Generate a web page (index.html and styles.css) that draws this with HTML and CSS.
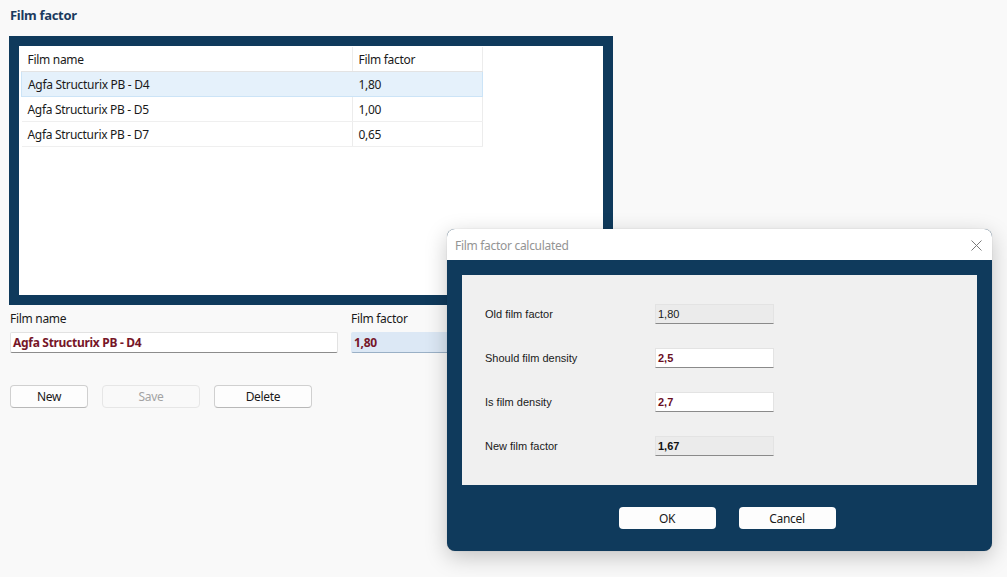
FILE: index.html
```html
<!DOCTYPE html>
<html>

<head>
  <title>Film factor</title>
  <link rel="stylesheet" href="styles.css">
</head>

<body>
  <div id="page">
    <h1 class="page-title">Film factor</h1>

    <div class="list-frame">
      <div class="list-inner">
        <table class="film-table">
          <tr class="head-row">
            <th class="col-name">Film name</th>
            <th class="col-factor">Film factor</th>
          </tr>
          <tr class="selected">
            <td>Agfa Structurix PB - D4</td>
            <td>1,80</td>
          </tr>
          <tr>
            <td>Agfa Structurix PB - D5</td>
            <td>1,00</td>
          </tr>
          <tr>
            <td>Agfa Structurix PB - D7</td>
            <td>0,65</td>
          </tr>
        </table>
      </div>
    </div>

    <div class="fields">
      <div class="field-group name-group">
        <label>Film name</label>
        <div class="text-box bold-red">Agfa Structurix PB - D4</div>
      </div>
      <div class="field-group factor-group">
        <label>Film factor</label>
        <div class="text-box bold-red focused">1,80</div>
      </div>
    </div>

    <div class="actions">
      <button class="btn btn-new">New</button>
      <button class="btn btn-wide" disabled>Save</button>
      <button class="btn btn-wide">Delete</button>
    </div>
  </div>

  <!-- modal window on top of the page -->
  <div class="dialog">
    <div class="dialog-title">
      <span>Film factor calculated</span>
      <svg class="close-icon" width="11" height="11" viewBox="0 0 11 11">
        <path d="M0.5 0.5 L10.5 10.5 M10.5 0.5 L0.5 10.5" stroke="#7a7a7a" stroke-width="1" fill="none" />
      </svg>
    </div>
    <div class="dialog-body">
      <div class="calc-panel">
        <span class="calc-label">Old film factor</span>
        <div class="calc-box readonly">1,80</div>

        <span class="calc-label">Should film density</span>
        <div class="calc-box editable">2,5</div>

        <span class="calc-label">Is film density</span>
        <div class="calc-box editable">2,7</div>

        <span class="calc-label">New film factor</span>
        <div class="calc-box readonly result">1,67</div>
      </div>
      <div class="dialog-buttons">
        <button class="dlg-btn">OK</button>
        <button class="dlg-btn">Cancel</button>
      </div>
    </div>
  </div>
</body>

</html>
```

FILE: styles.css
```css
body {
  margin: 0;
  background-color: #F9F9F9;
  font-family: "Noto Sans", "Open Sans", sans-serif;
  font-size: 12px;
  letter-spacing: -0.3px;
  color: #1A1A1A;
  width: 1007px;
  height: 577px;
  overflow: hidden;
}

#page {
  padding: 0 0 0 9px;
}

.page-title {
  margin: 0;
  padding: 6px 0 0 1px;
  height: 36px;
  box-sizing: border-box;
  font-size: 13px;
  font-weight: bold;
  color: #1B3B5E;
}

.list-frame {
  width: 604px;
  height: 269px;
  box-sizing: border-box;
  border: 10px solid #0F3A5C;
  background-color: #FFF;
}

.list-inner {
  padding: 1px 0 0 2px;
}

.film-table {
  border-collapse: collapse;
  table-layout: fixed;
  width: 462px;
}

.film-table th,
.film-table td {
  height: 24px;
  padding: 0 0 0 6px;
  text-align: left;
  font-weight: normal;
  white-space: nowrap;
  border-bottom: 1px solid #EFEFEF;
}

.film-table th {
  border-bottom: 1px solid #E3E3E3;
}

.col-name {
  width: 324px;
}

.film-table td:first-child,
.film-table th:first-child {
  border-right: 1px solid #ECECEC;
}

.film-table td:last-child,
.film-table th:last-child {
  border-right: 1px solid #ECECEC;
}

.film-table tr.selected td {
  background-color: #E5F1FB;
  border-top: 1px solid #CCE4F7;
  border-bottom: 1px solid #CCE4F7;
  border-right-color: #E5F1FB;
}

.film-table tr.selected td:first-child {
  border-left: 1px solid #CCE4F7;
}

.film-table tr.selected td:last-child {
  border-right: 1px solid #CCE4F7;
}

.fields {
  display: flex;
  gap: 13px;
  padding: 6px 0 0 1px;
}

.field-group label {
  display: block;
  height: 21px;
  line-height: 16px;
}

.name-group .text-box {
  width: 328px;
}

.factor-group .text-box {
  width: 130px;
}

.text-box {
  height: 21px;
  box-sizing: border-box;
  line-height: 19px;
  padding: 0 2px;
  background-color: #FFF;
  border: 1px solid #E2E2E2;
  border-bottom-color: #8C8C8C;
  border-radius: 2px;
}

.text-box.focused {
  background-color: #DCE8F5;
  border-color: #DCE8F5;
  border-bottom-color: #9AB0C6;
}

.bold-red {
  font-weight: bold;
  color: #761628;
}

.actions {
  display: flex;
  gap: 14px;
  padding: 32px 0 0 1px;
}

.btn {
  height: 23px;
  font-family: inherit;
  font-size: 12px;
  letter-spacing: -0.3px;
  color: #1A1A1A;
  background-color: #FDFDFD;
  border: 1px solid #D0D0D0;
  border-bottom-color: #B8B8B8;
  border-radius: 4px;
  padding: 0;
}

.btn-new {
  width: 78px;
}

.btn-wide {
  width: 98px;
}

.btn:disabled {
  color: #A3A3A3;
  background-color: #F9F9F9;
  border-color: #E6E6E6;
}

.dialog {
  position: absolute;
  left: 447px;
  top: 229px;
  width: 545px;
  height: 322px;
  border-radius: 8px;
  overflow: hidden;
  background-color: #0F3A5C;
  box-shadow: 0 6px 22px rgba(0, 0, 0, 0.22), 0 0 1px rgba(0, 0, 0, 0.3);
}

.dialog-title {
  display: flex;
  align-items: center;
  justify-content: space-between;
  height: 31px;
  padding: 1px 10px 0 8px;
  box-sizing: border-box;
  background-color: #FFF;
  color: #949494;
}

.dialog-body {
  padding: 15px 15px 0 15px;
}

.calc-panel {
  height: 210px;
  box-sizing: border-box;
  background-color: #F0F0F0;
  padding: 29px 0 0 23px;
  display: grid;
  grid-template-columns: 170px 119px;
  grid-auto-rows: 20px;
  row-gap: 24px;
  align-items: center;
  font-family: "Liberation Sans", Arial, sans-serif;
  font-size: 11px;
  letter-spacing: 0;
}

.calc-label {
  color: #1A1A1A;
}

.calc-box {
  height: 20px;
  box-sizing: border-box;
  line-height: 18px;
  padding: 0 2px;
  border: 1px solid #E3E3E3;
  border-bottom-color: #8A8A8A;
  font-size: 11px;
}

.calc-box.readonly {
  background-color: #EBEBEB;
}

.calc-box.editable {
  background-color: #FFF;
  font-weight: bold;
  color: #6A0F1F;
}

.calc-box.result {
  font-weight: bold;
  color: #111;
}

.dialog-buttons {
  display: flex;
  justify-content: center;
  gap: 23px;
  padding: 22px 0 0 15px;
}

.dlg-btn {
  height: 22px;
  width: 97px;
  font-family: "Noto Sans", sans-serif;
  font-size: 12px;
  letter-spacing: -0.3px;
  color: #1A1A1A;
  background-color: #FDFDFD;
  border: none;
  border-radius: 4px;
  padding: 0;
}
```
